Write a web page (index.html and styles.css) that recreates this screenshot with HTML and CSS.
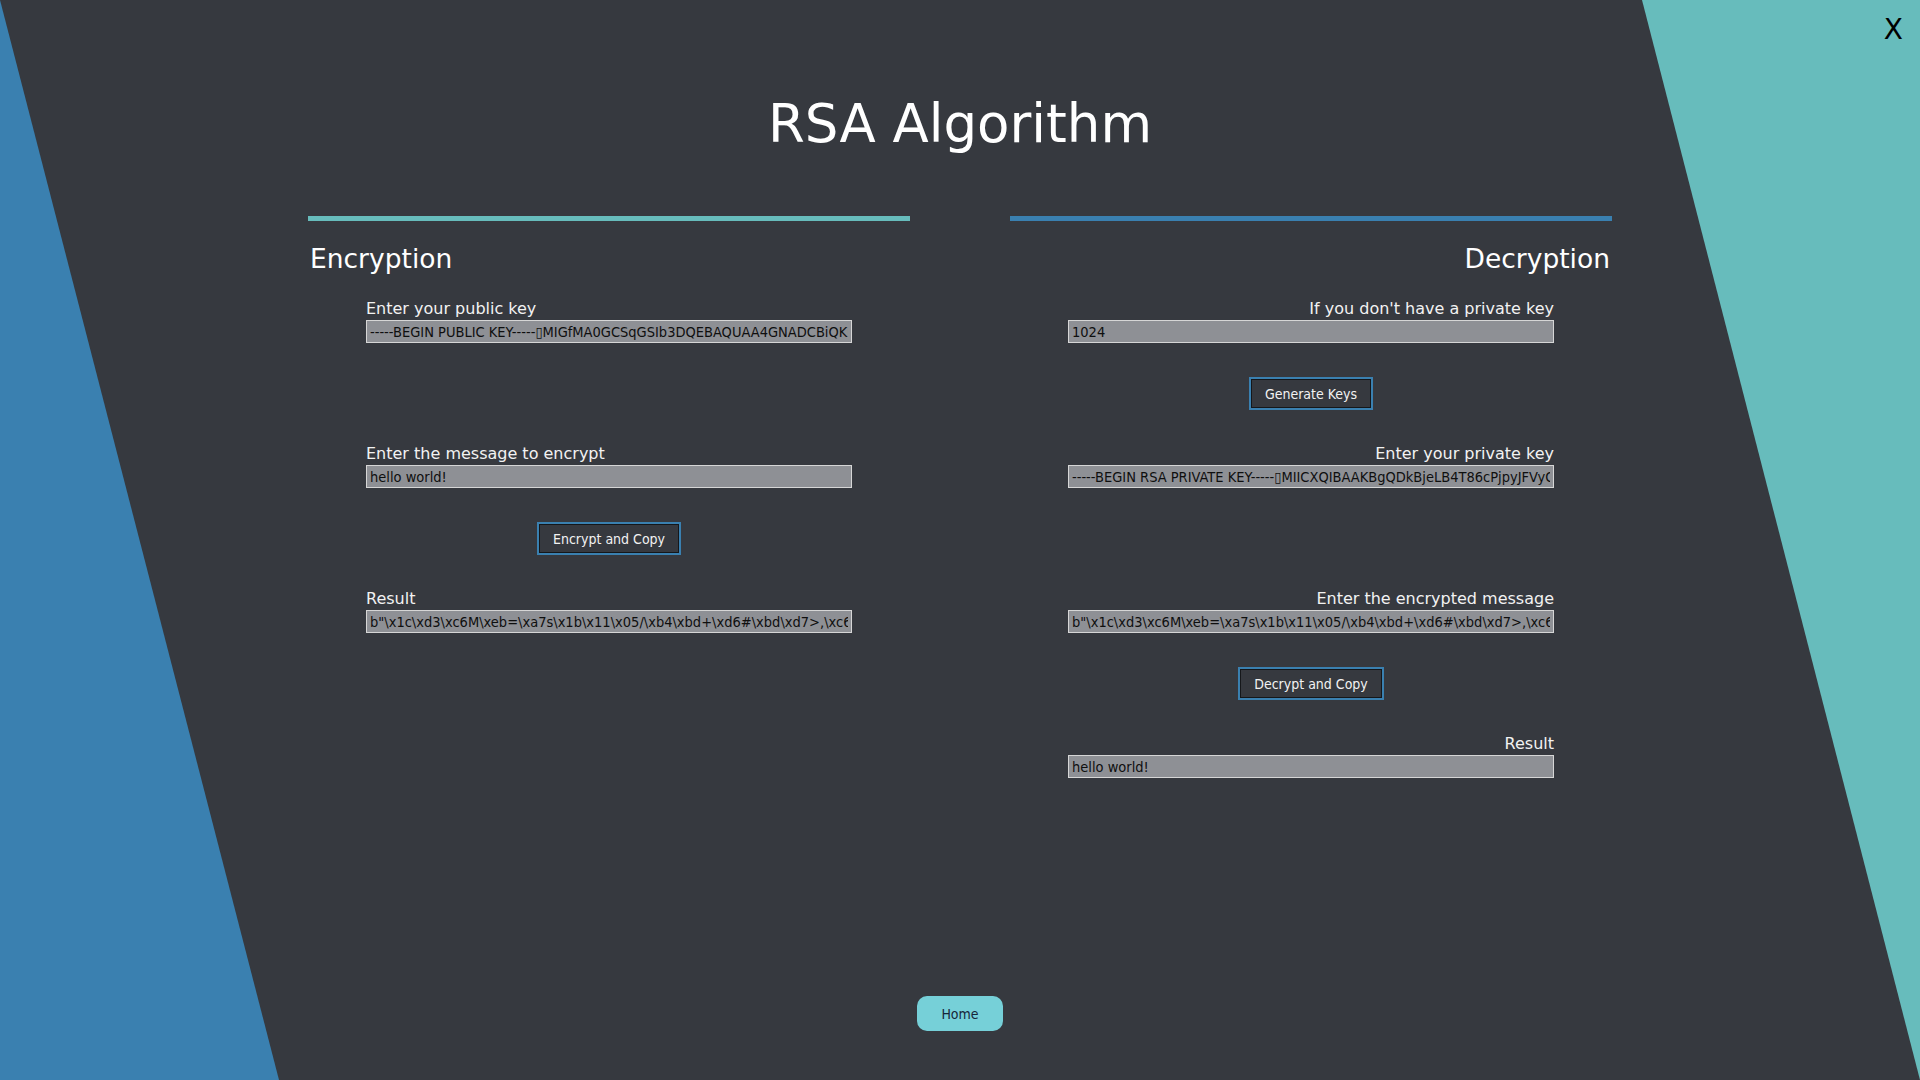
FILE: index.html
```html
<!DOCTYPE html>
<html lang="en">
<head>
<meta charset="utf-8">
<title>RSA Algorithm</title>
<link rel="stylesheet" href="styles.css">
</head>
<body>
<div class="bg-left"></div>
<div class="bg-right"></div>
<button class="close">X</button>
<main class="page">
  <h1 class="title">RSA Algorithm</h1>
  <div class="columns">
    <section class="panel panel-enc">
      <h2 class="panel-title">Encryption</h2>
      <div class="fields">
        <div class="field">
          <label class="field-label">Enter your public key</label>
          <input class="field-input" type="text" value="-----BEGIN PUBLIC KEY-----&#9647;MIGfMA0GCSqGSIb3DQEBAQUAA4GNADCBiQKBgQDkBjeLB4T86cPjpyJFVy">
        </div>
        <div class="slot"></div>
        <div class="field">
          <label class="field-label">Enter the message to encrypt</label>
          <input class="field-input" type="text" value="hello world!">
        </div>
        <div class="slot"><button class="action">Encrypt and Copy</button></div>
        <div class="field">
          <label class="field-label">Result</label>
          <input class="field-input" type="text" value="b&quot;\x1c\xd3\xc6M\xeb=\xa7s\x1b\x11\x05/\xb4\xbd+\xd6#\xbd\xd7&gt;,\xc6\x9a\x12">
        </div>
      </div>
    </section>
    <section class="panel panel-dec">
      <h2 class="panel-title">Decryption</h2>
      <div class="fields">
        <div class="field">
          <label class="field-label">If you don't have a private key</label>
          <input class="field-input" type="text" value="1024">
        </div>
        <div class="slot"><button class="action">Generate Keys</button></div>
        <div class="field">
          <label class="field-label">Enter your private key</label>
          <input class="field-input" type="text" value="-----BEGIN RSA PRIVATE KEY-----&#9647;MIICXQIBAAKBgQDkBjeLB4T86cPjpyJFVyQmZ">
        </div>
        <div class="slot"></div>
        <div class="field">
          <label class="field-label">Enter the encrypted message</label>
          <input class="field-input" type="text" value="b&quot;\x1c\xd3\xc6M\xeb=\xa7s\x1b\x11\x05/\xb4\xbd+\xd6#\xbd\xd7&gt;,\xc6\x9a\x12">
        </div>
        <div class="slot"><button class="action">Decrypt and Copy</button></div>
        <div class="field">
          <label class="field-label">Result</label>
          <input class="field-input" type="text" value="hello world!">
        </div>
      </div>
    </section>
  </div>
  <button class="home">Home</button>
</main>
</body>
</html>
```
FILE: styles.css
```css
html, body {
  margin: 0;
  padding: 0;
  width: 100%;
  height: 100%;
  overflow: hidden;
}

body {
  background: #36393f;
  font-family: "DejaVu Sans", sans-serif;
  color: #f2f2f2;
  position: relative;
}

.bg-left,
.bg-right {
  position: absolute;
  inset: 0;
  pointer-events: none;
}

.bg-left {
  background: #3a80b0;
  clip-path: polygon(0 0, 279px 1080px, 0 1080px);
}

.bg-right {
  background: #67bcbc;
  clip-path: polygon(1642px 0, 1920px 0, 1920px 1080px);
}

.close {
  position: absolute;
  top: 16px;
  right: 17px;
  margin: 0;
  padding: 0;
  border: 0;
  background: transparent;
  font-family: "DejaVu Sans", sans-serif;
  font-size: 28px;
  line-height: 28px;
  color: #000;
  z-index: 2;
}

.page {
  position: relative;
  z-index: 1;
  height: 100%;
  display: flex;
  flex-direction: column;
  align-items: center;
  box-sizing: border-box;
  padding-top: 93px;
  padding-bottom: 49px;
}

.title {
  margin: 0;
  font-size: 53px;
  line-height: 62px;
  font-weight: normal;
  color: #ffffff;
}

.columns {
  margin-top: 61px;
  display: flex;
  gap: 100px;
}

.panel {
  width: 602px;
  border-top: 5px solid #67bcbc;
}

.panel-dec {
  border-top-color: #3a80b0;
  text-align: right;
}

.panel-title {
  margin: 22px 0 0;
  padding: 0 2px;
  font-size: 26.5px;
  line-height: 31px;
  font-weight: normal;
  color: #ffffff;
}

.fields {
  margin-top: 25px;
  padding: 0 58px;
  display: flex;
  flex-direction: column;
}

.field {
  display: flex;
  flex-direction: column;
}

.panel-dec .field {
  align-items: flex-end;
}

.field-label {
  font-size: 16px;
  line-height: 19px;
  margin-bottom: 2px;
  color: #f2f2f2;
}

.field-input {
  box-sizing: border-box;
  width: 486px;
  height: 23px;
  margin: 0;
  padding: 0 3px;
  border: 1px solid #d6d6d6;
  border-radius: 0;
  background: #8e9095;
  color: #0f0f0f;
  font-family: "DejaVu Sans Condensed", "DejaVu Sans", sans-serif;
  font-stretch: condensed;
  font-size: 14.5px;
  outline: none;
}

.slot {
  height: 101px;
  display: flex;
  align-items: center;
  justify-content: center;
}

.action {
  box-sizing: border-box;
  height: 33px;
  margin: 0;
  padding: 0 14px;
  border: 2px solid #3a80b0;
  box-shadow: inset 0 0 0 1px #15171a;
  background: #36393f;
  color: #f2f2f2;
  font-family: "DejaVu Sans Condensed", "DejaVu Sans", sans-serif;
  font-stretch: condensed;
  font-size: 14px;
  cursor: pointer;
}

.home {
  margin-top: auto;
  width: 86px;
  height: 35px;
  padding: 0;
  border: 0;
  border-radius: 10px;
  background: #76d0d8;
  color: #17263a;
  font-family: "DejaVu Sans Condensed", "DejaVu Sans", sans-serif;
  font-stretch: condensed;
  font-size: 14px;
  cursor: pointer;
}
```
